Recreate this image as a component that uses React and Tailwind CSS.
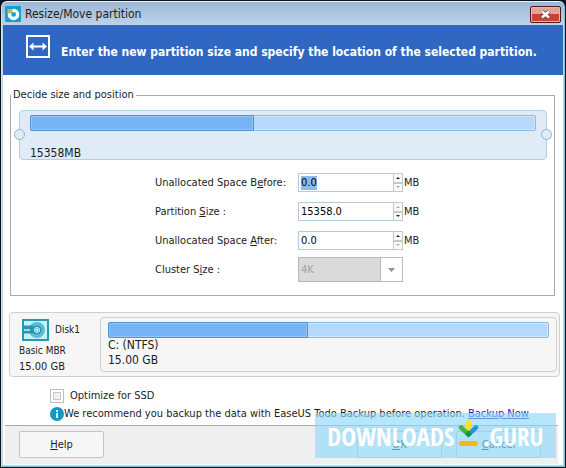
import { useEffect, useRef } from "react";

const sizeFields = [
    { id: "before", label: <>Unallocated Space B<u>e</u>fore:</>, value: "0.0", up: true, down: false },
    { id: "size", label: <>Partition <u>S</u>ize :</>, value: "15358.0", up: false, down: true },
    { id: "after", label: <>Unallocated Space <u>A</u>fter:</>, value: "0.0", up: true, down: false },
];

function AppIcon() {
    return (
        <svg width="16" height="16" viewBox="0 0 16 16" aria-hidden="true">
            <rect width="16" height="16" rx="1" fill="#16a0d0" />
            <circle cx="8.500" cy="8.500" r="4" fill="none" stroke="#fff" strokeWidth="3.500" />
            <path d="M2.500 3h5v4.500h-5z" fill="#b9c04a" />
            <path d="M7 6.500h3.500v4z" fill="#16a0d0" />
        </svg>
    );
}

function ResizeIcon() {
    return (
        <svg width="24" height="23" viewBox="0 0 24 23" aria-hidden="true">
            <rect x="1" y="1" width="22" height="21" fill="none" stroke="#fff" strokeWidth="2" />
            <path d="M3 11.500l4.500-4v3h9v-3l4.500 4-4.500 4v-3h-9v3z" fill="#fff" />
        </svg>
    );
}

function DiskIcon() {
    return (
        <svg width="27" height="22" viewBox="0 0 27 22" aria-hidden="true">
            <rect x="1" y="1" width="25" height="20" fill="#c4f3f7" stroke="#2797b4" strokeWidth="2" />
            <circle cx="15" cy="11" r="8" fill="#62b9d4" />
            <path d="M2 6.500h9l3 4.500-3 3.500H2z" fill="#2797b4" />
            <path d="M2 11h6" stroke="#c4f3f7" strokeWidth="1.500" />
            <circle cx="15" cy="11" r="4.500" fill="#2797b4" />
            <circle cx="15" cy="11" r="2.500" fill="#62b9d4" stroke="#d6f7fa" />
            <circle cx="15" cy="11" r="1" fill="#fff" />
        </svg>
    );
}

function InfoIcon() {
    return (
        <svg width="14" height="14" viewBox="0 0 14 14" aria-hidden="true">
            <circle cx="7" cy="7" r="7" fill="#1496c8" />
            <path d="M6 3h2v2H6zM6 6h2v5H6z" fill="#fff" />
        </svg>
    );
}

function DownloadMark() {
    return (
        <svg width="21" height="27" viewBox="0 0 21 27" aria-hidden="true">
            <path d="M8 2.500a2.500 2.500 0 0 1 5 0V13H8z" fill="#ffe02e" />
            <path d="M3 7.500l7.500 7" stroke="#3fb54a" strokeWidth="4.500" strokeLinecap="round" />
            <path d="M18 7.500l-7.500 7" stroke="#2196e3" strokeWidth="4.500" strokeLinecap="round" />
            <path d="M10.500 10.500l3.500 3.500-3.500 3.500L7 14z" fill="#18934a" />
            <rect x="1" y="21" width="19" height="5" rx="2.500" fill="#ffb612" />
        </svg>
    );
}

function UsageBar({ percent }) {
    return (
        <div className="h-4 rounded-xs border border-[#8fb8dc] bg-[#b5d9fd] shadow-[inset_0_0_0_1px_#d3e8fd]">
            <div
                className="-mt-px -ml-px h-4 rounded-l-xs border border-[#5590cf] bg-[#76b4f5] shadow-[inset_0_0_0_1px_#94c5f8]"
                style={{ width: `${percent}%` }}
            />
        </div>
    );
}

function SpinButton({ up, active, label }) {
    return (
        <button
            type="button"
            aria-label={label}
            className="flex flex-1 items-center justify-center border border-[#c2c8cc] bg-[#fafafa]"
        >
            <svg width="4" height="2" viewBox="0 0 4 2">
                <path d={up ? "M0 2l2-2 2 2z" : "M0 0l2 2 2-2z"} fill={active ? "#222" : "#aaa"} />
            </svg>
        </button>
    );
}

function FooterButton({ children }) {
    return (
        <button
            type="button"
            className="h-[27px] w-[85px] rounded-xs border border-[#c4c4c4] bg-[#f6f6f6]"
        >
            {children}
        </button>
    );
}

export default function App() {
    const firstField = useRef(null);

    useEffect(() => {
        firstField.current.focus();
        firstField.current.select();
    }, []);

    return (
        <div className="bg-[#06141c] p-px font-['DejaVu_Sans_Condensed','DejaVu_Sans',sans-serif] text-[11px] leading-[14px] text-[#1c1c1c]">
            <div className="relative rounded-t-md border border-t-[#eef4fa] border-r-[#7cc4dd] border-b-[#7cc4dd] border-l-[#d5e2ee] bg-linear-to-b from-[#9db8d6] to-[#bdd3ea] to-5% p-px">
                <header className="flex h-[22px] items-center pr-0.5 pl-0.5 text-xs">
                    <AppIcon />
                    <h1 className="ml-1 flex-1">Resize/Move partition</h1>
                    <button
                        type="button"
                        aria-label="Close"
                        className="flex h-[17px] w-[31px] items-center justify-center rounded-xs border border-[#4d1a1a] bg-linear-to-b from-[#e5a397] from-50% to-[#c8442e] to-50% shadow-[inset_0_0_0_1px_#eab4a8]"
                    >
                        <svg width="11" height="9" viewBox="0 0 11 9">
                            <path d="M2 1.500l7 6M9 1.500l-7 6" stroke="#54434a" strokeWidth="4" />
                            <path d="M2 1.500l7 6M9 1.500l-7 6" stroke="#fff" strokeWidth="2.500" />
                        </svg>
                    </button>
                </header>

                <div className="flex h-[50px] items-start gap-[11px] bg-[#3067c2] pt-[10px] pl-[23px] text-white">
                    <ResizeIcon />
                    <p className="pt-[9px] text-xs font-bold whitespace-nowrap">
                        Enter the new partition size and specify the location of the selected partition.
                    </p>
                </div>

                <main className="bg-white pt-[13px] pb-px">
                    <fieldset className="mr-2 ml-[7px] border border-[#a9a9a9] pt-2 pr-[7px] pb-[11px] pl-2">
                        <legend className="-ml-2 px-0.5">Decide size and position</legend>
                        <div className="relative h-[50px] rounded-sm border border-[#b3cfe2] bg-[#dfebf6] px-[10px] pt-1">
                            <UsageBar percent={44.5} />
                            <p className="mt-3.5 text-xs">15358MB</p>
                            <span className="absolute top-[18px] -left-[6px] size-[11px] rounded-full border border-[#8fb6d2] bg-[#dfebf6]" />
                            <span className="absolute top-[18px] -right-[6px] size-[11px] rounded-full border border-[#8fb6d2] bg-[#dfebf6]" />
                        </div>
                        <div className="mt-2 ml-[136px] grid auto-rows-[29px] grid-cols-[143px_105px_auto] items-center">
                            {sizeFields.map((field, i) => (
                                <div key={field.id} className="contents">
                                    <label htmlFor={field.id}>{field.label}</label>
                                    <div className="flex h-[19px]">
                                        <input
                                            id={field.id}
                                            ref={i === 0 ? firstField : null}
                                            defaultValue={field.value}
                                            className="w-full min-w-0 border border-r-0 border-[#b4ccd9] bg-white pl-0.5 text-black outline-none selection:bg-[#8db8f0] selection:text-black"
                                        />
                                        <div className="flex w-[10px] shrink-0 flex-col">
                                            <SpinButton up active={field.up} label="Increase" />
                                            <SpinButton active={field.down} label="Decrease" />
                                        </div>
                                    </div>
                                    <span className="pl-px">MB</span>
                                </div>
                            ))}
                            <label htmlFor="cluster">Cluster S<u>i</u>ze :</label>
                            <div className="relative">
                                <select
                                    id="cluster"
                                    disabled
                                    className="block h-[25px] w-full appearance-none border border-[#b8b8b8] bg-[#dadada] pl-0.5 text-[#a3a3a3] opacity-100"
                                >
                                    <option>4K</option>
                                </select>
                                <span className="pointer-events-none absolute inset-y-0 right-0 flex w-[23px] items-center justify-center border border-[#b8b8b8] bg-white">
                                    <svg width="7" height="4" viewBox="0 0 7 4">
                                        <path d="M0 0h7L3.500 4z" fill="#909090" />
                                    </svg>
                                </span>
                            </div>
                        </div>
                    </fieldset>

                    <section className="mt-4 mr-[3px] ml-[6px] flex h-[65px] rounded-sm border border-[#cfcfcf] bg-[#f6f6f6] py-1 pr-0.5 pl-[9px]">
                        <div className="w-[81px] shrink-0">
                            <div className="flex items-center gap-[6px] pt-0.5 pl-[3px] text-[10px]">
                                <DiskIcon />
                                Disk1
                            </div>
                            <p className="mt-[3px] text-[10px]">Basic MBR</p>
                            <p className="mt-0.5">15.00 GB</p>
                        </div>
                        <div className="flex-1 rounded-sm border border-[#cfcfcf] px-[7px] pt-1 text-xs leading-[15px]">
                            <UsageBar percent={45.5} />
                            <p>C: (NTFS)</p>
                            <p>15.00 GB</p>
                        </div>
                    </section>

                    <div className="mt-3 ml-[47px] flex items-center gap-[6px]">
                        <input
                            id="ssd"
                            type="checkbox"
                            className="size-[14px] appearance-none border border-[#bcbcbc] bg-[#f1f1f1] shadow-[inset_0_0_0_2px_#fff,inset_0_0_0_3px_#c9c9c9]"
                        />
                        <label htmlFor="ssd">Optimize for SSD</label>
                    </div>
                    <p className="mt-1 ml-[47px] flex items-center whitespace-nowrap">
                        <InfoIcon />
                        We recommend you backup the data with EaseUS Todo Backup before operation.
                        <a href="#backup" className="ml-[3px] text-[#1a1ac0] underline">Backup Now</a>
                    </p>

                    <footer className="mt-1 mr-[5px] ml-0.5 flex items-start border-t border-[#aaa] bg-[#efefef] pt-[5px] pr-[17px] pb-[6px] pl-[14px]">
                        <FooterButton><u>H</u>elp</FooterButton>
                        <div className="ml-auto flex gap-[14px]">
                            <FooterButton><u>O</u>K</FooterButton>
                            <FooterButton><u>C</u>ancel</FooterButton>
                        </div>
                    </footer>
                </main>

                <div className="pointer-events-none absolute right-2 bottom-2 flex h-[45px] w-[241px] items-center justify-center bg-[#8dd8fa]/65 font-['Open_Sans_Condensed','Liberation_Sans_Narrow','Liberation_Sans',sans-serif] text-[25px] font-bold text-white">
                    <span>DOWNLOADS</span>
                    <span className="mx-1 mb-1"><DownloadMark /></span>
                    <span>.GURU</span>
                </div>
            </div>
        </div>
    );
}
